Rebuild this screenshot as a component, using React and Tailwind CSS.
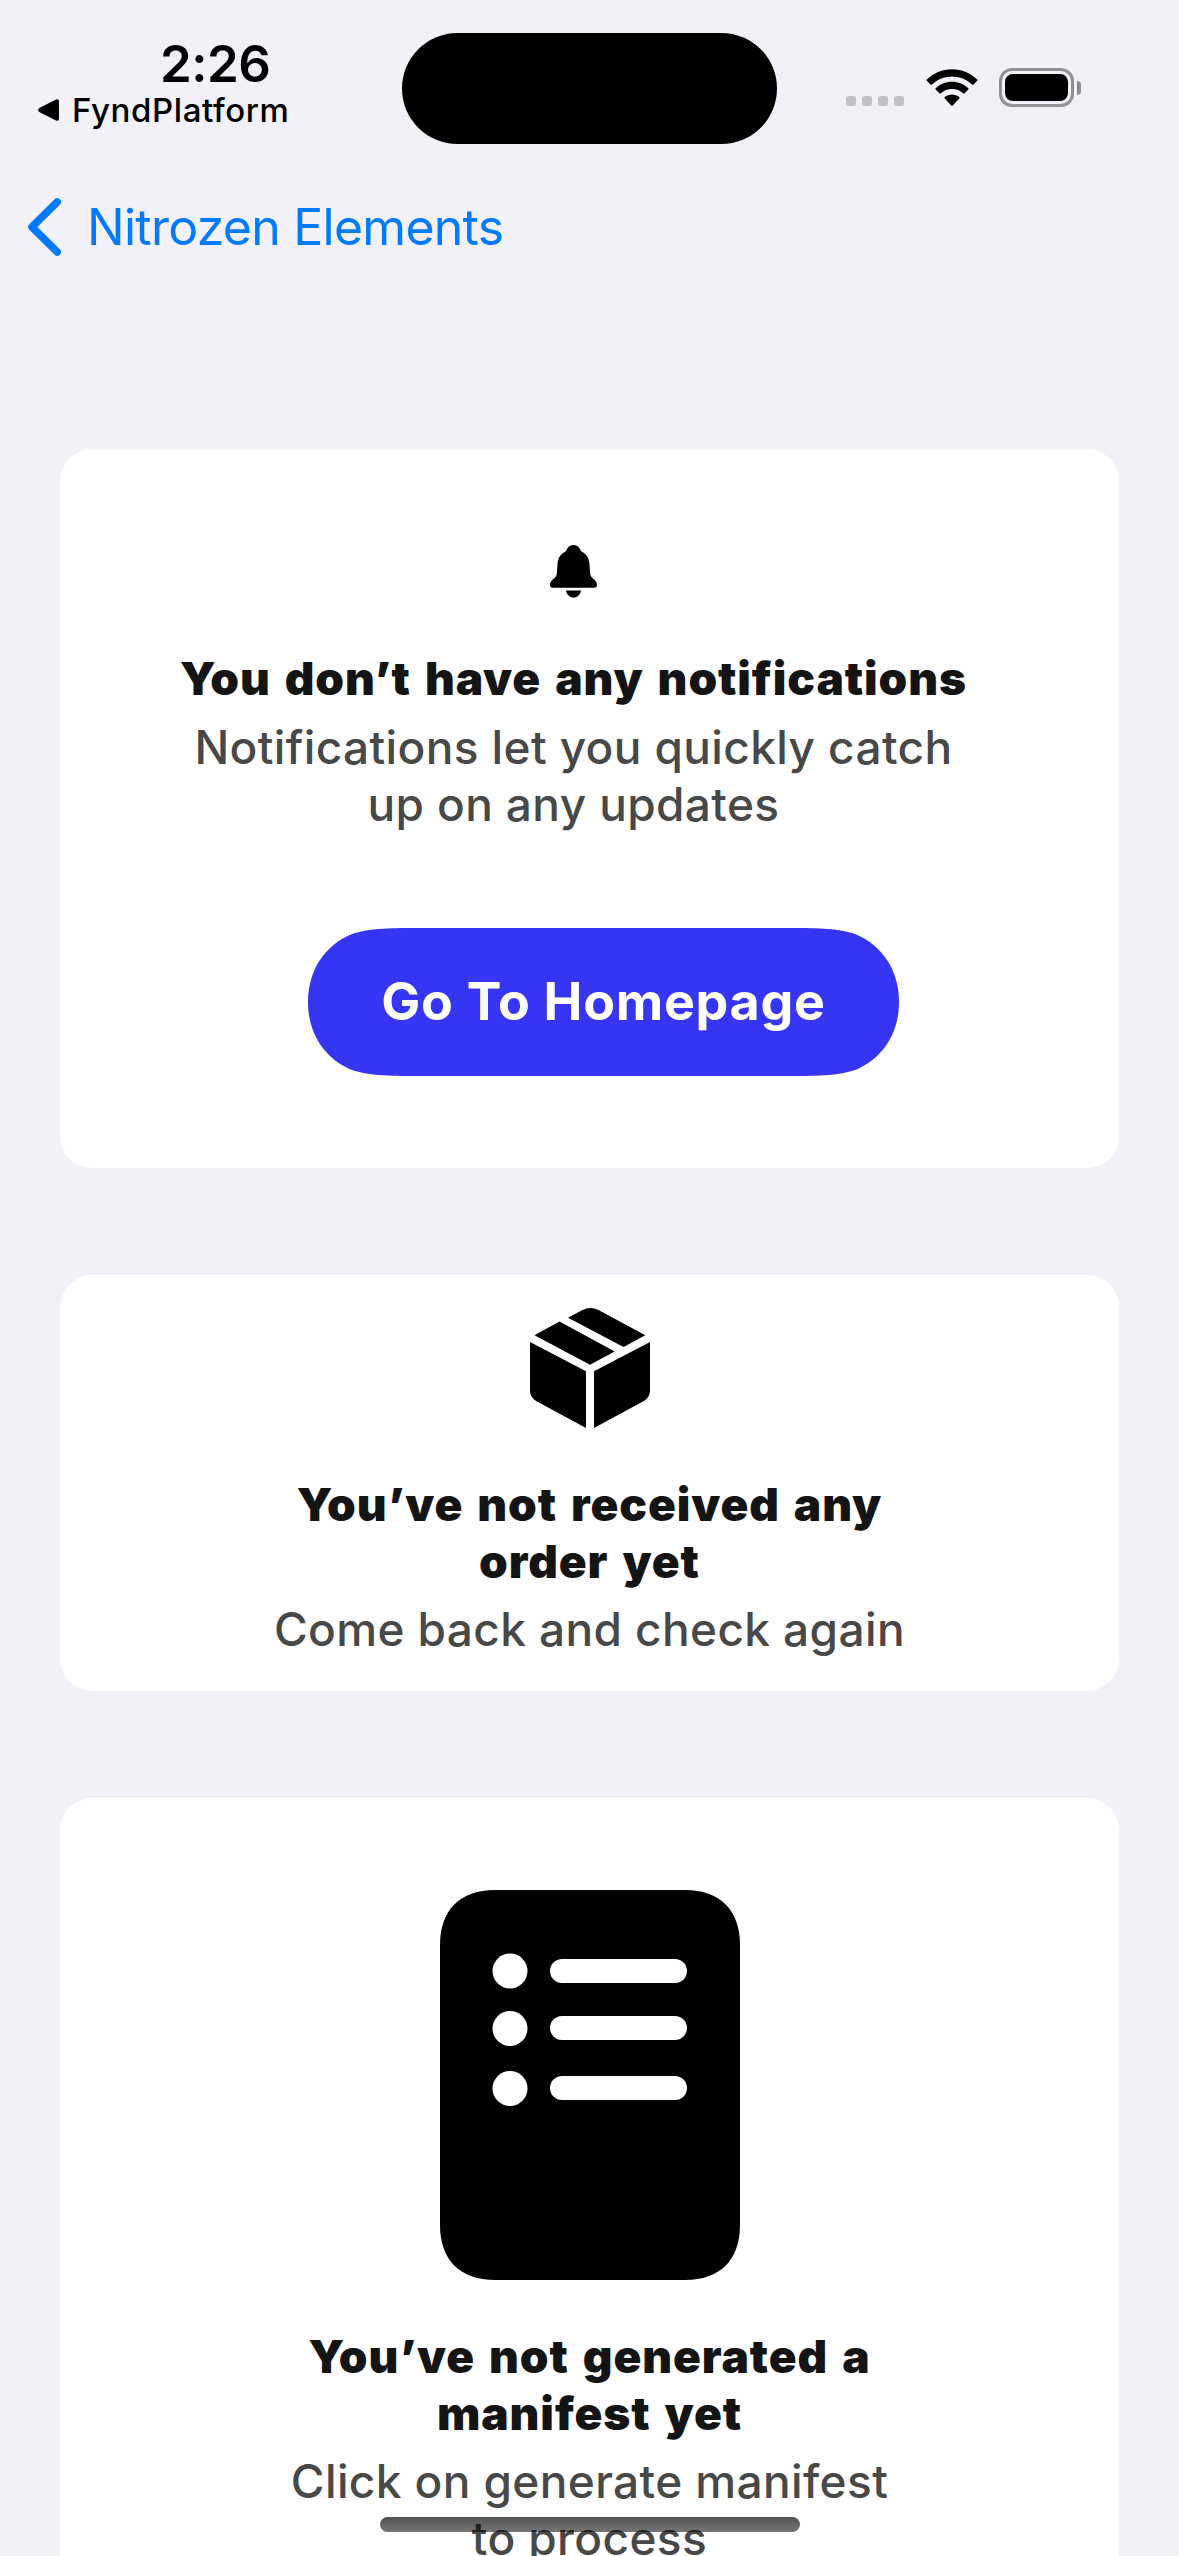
function BackTriangle() {
  return (
    <svg className="h-[22px] w-[21px]" viewBox="0 0 21 22">
      <path d="M1.3 8.9 18 .5Q21-.6 21 2.3V19.8Q21 22.6 18 21.6L1.3 13.1Q-1 11 1.3 8.9Z" />
    </svg>
  );
}

function Wifi() {
  return (
    <svg className="h-[38px] w-[52px]" viewBox="0 0 52 38">
      <path d="M26 .3C35.8.3 44.7 4.2 51.1 10.4Q51.8 11.1 51.1 11.8L47.5 15.5Q46.8 16.1 46.1 15.5A29 29 0 0 0 5.9 15.5Q5.2 16.1 4.5 15.5L.9 11.8Q.2 11.1.9 10.4C7.3 4.2 16.2.3 26 .3Z" />
      <path d="M26 12.8C32.3 12.8 38 15.2 42.3 19.2Q43 19.9 42.3 20.6L38.6 24.3Q37.9 24.9 37.2 24.3A16.5 16.5 0 0 0 14.8 24.3Q14.1 24.9 13.4 24.3L9.7 20.6Q9 19.9 9.7 19.2C14 15.2 19.7 12.8 26 12.8Z" />
      <path d="M26 25.4C28.8 25.4 31.3 26.4 33.3 28.1Q34 28.8 33.3 29.5L26.7 36.5Q26 37.2 25.3 36.5L18.7 29.5Q18 28.8 18.7 28.1C20.7 26.4 23.2 25.4 26 25.4Z" />
    </svg>
  );
}

function Battery() {
  return (
    <div className="flex items-center gap-[3px]">
      <div className="h-[39px] w-[75px] rounded-[13px] border-3 border-[#929295] p-[3px]">
        <div className="h-full w-full rounded-[8px] bg-black" />
      </div>
      <div className="h-[14px] w-[4px] rounded-r-full bg-[#8e8e91]" />
    </div>
  );
}

function Bell() {
  return (
    <svg className="h-[53px] w-[47px]" viewBox="0 0 47 53">
      <path d="M23.5 0C27.3 0 29.6 2.4 31 6.2C36.4 8.6 39 13 39.4 18.5L40.2 28.5C40.4 33.8 47 34.3 47 39.8C47 41.8 46.1 42.8 44.2 42.8H2.8C.9 42.8 0 41.8 0 39.8C0 34.3 6.6 33.8 6.8 28.5L7.6 18.5C8 13 10.6 8.6 16 6.2C17.4 2.4 19.7 0 23.5 0Z" />
      <path d="M16 45.6H31C30.3 49.9 27.4 52.6 23.5 52.6S16.7 49.9 16 45.6Z" />
    </svg>
  );
}

function Box() {
  return (
    <svg className="size-[120px]" viewBox="0 0 120 120">
      <path d="M38 9.8 52 2.3Q60-2 68.5 2L115.3 27.3 93.6 39Z" />
      <path d="M4.5 27.3 29.5 13.5 84.7 43.4 60 56.7Z" />
      <path d="M0 34 56 63.3V120L7.5 93.8Q0 89.8 0 83Z" />
      <path d="M120 34 64 63.3V120L112.5 93.8Q120 89.8 120 83Z" />
    </svg>
  );
}

function Manifest() {
  return (
    <svg className="h-[390px] w-[300px]" viewBox="0 0 300 390">
      <path d="M0 55C0 20 20 0 55 0H245C280 0 300 20 300 55V335C300 370 280 390 245 390H55C20 390 0 370 0 335Z" />
      <g fill="#fff">
        <circle cx="70" cy="81" r="17.5" />
        <circle cx="70" cy="138.5" r="17.5" />
        <circle cx="70" cy="198.5" r="17.5" />
        <rect x="110" y="69" width="137" height="24" rx="12" />
        <rect x="110" y="126" width="137" height="24" rx="12" />
        <rect x="110" y="186" width="137" height="24" rx="12" />
      </g>
    </svg>
  );
}

function Title({ lines }) {
  return (
    <h2 className="flex flex-col items-center text-[46px] leading-[57px] font-black tracking-[0.9px] text-[#141414] [word-spacing:4px]">
      {lines.map((line) => (
        <span key={line}>{line}</span>
      ))}
    </h2>
  );
}

function Description({ lines }) {
  return (
    <p className="flex flex-col items-center text-[46px] leading-[57px] font-medium tracking-[0.38px] text-[#484848]">
      {lines.map((line) => (
        <span key={line}>{line}</span>
      ))}
    </p>
  );
}

export default function App() {
  return (
    <div className="relative h-[2556px] w-[1179px] overflow-hidden bg-[#f2f1f7] font-['Inter',sans-serif] whitespace-nowrap">
      <header className="flex h-[170px] items-start">
        <div className="w-[402px] pt-[34px] pl-[38px]">
          <div className="pl-[122px] text-[51px] leading-[60px] font-semibold tracking-[-0.5px]">2:26</div>
          <div className="mt-px flex items-center gap-[13px] text-[33px] leading-[30px] font-medium tracking-[0.6px]">
            <BackTriangle />
            FyndPlatform
          </div>
        </div>
        <div className="mt-[33px] h-[111px] w-[375px] rounded-full bg-black" />
        <div className="flex items-center pt-[68px] pl-[69px]">
          <div className="mt-[27px] flex gap-[6px]">
            {[0, 1, 2, 3].map((i) => (
              <span key={i} className="h-[10px] w-[10px] rounded-[3px] bg-[#c1c0c6]" />
            ))}
          </div>
          <div className="ml-[22px] flex items-center gap-[21px]">
            <Wifi />
            <Battery />
          </div>
        </div>
      </header>
      <nav className="flex h-[114px] items-center gap-[25px] pl-[27px] text-[50px] tracking-[-0.75px] text-[#007aff]">
        <svg className="h-[58px] w-[35px]" viewBox="0 0 35 58" fill="none" stroke="#007aff" strokeWidth="7.5" strokeLinecap="round" strokeLinejoin="round">
          <path d="M30.2 4 5 29 30.2 54" />
        </svg>
        Nitrozen Elements
      </nav>
      <main className="flex flex-col gap-[107px] px-[60px] pt-[165px]">
        <section className="flex h-[719px] flex-col items-center rounded-[32px] bg-white pt-[96px]">
          <div className="mr-[32px] flex flex-col items-center gap-[52px]">
            <Bell />
            <div className="flex flex-col gap-[12px]">
              <Title lines={["You don’t have any notifications"]} />
              <Description lines={["Notifications let you quickly catch", "up on any updates"]} />
            </div>
          </div>
          <button className="mt-[95px] ml-[28px] h-[148px] w-[591px] bg-[#3535f3] text-[52px] font-bold tracking-[0.7px] text-white [clip-path:path('M0_74C0_42_17_17_44_6C60_.5_78_0_110_0H481C513_0_531_.5_547_6C574_17_591_42_591_74C591_106_574_131_547_142C531_147.5_513_148_481_148H110C78_148_60_147.5_44_142C17_131_0_106_0_74Z')]">
            Go To Homepage
          </button>
        </section>
        <section className="flex h-[416px] flex-col items-center gap-[48px] rounded-[32px] bg-white pt-[33px]">
          <Box />
          <div className="flex flex-col gap-[11px]">
            <Title lines={["You’ve not received any", "order yet"]} />
            <Description lines={["Come back and check again"]} />
          </div>
        </section>
        <section className="flex h-[900px] flex-col items-center gap-[48px] rounded-[32px] bg-white pt-[92px]">
          <Manifest />
          <div className="flex flex-col gap-[11px]">
            <Title lines={["You’ve not generated a", "manifest yet"]} />
            <Description lines={["Click on generate manifest", "to process"]} />
          </div>
        </section>
      </main>
      <div className="absolute bottom-[24px] left-[380px] h-[15px] w-[420px] rounded-full bg-linear-to-b from-black/68 to-black/54" />
    </div>
  );
}
